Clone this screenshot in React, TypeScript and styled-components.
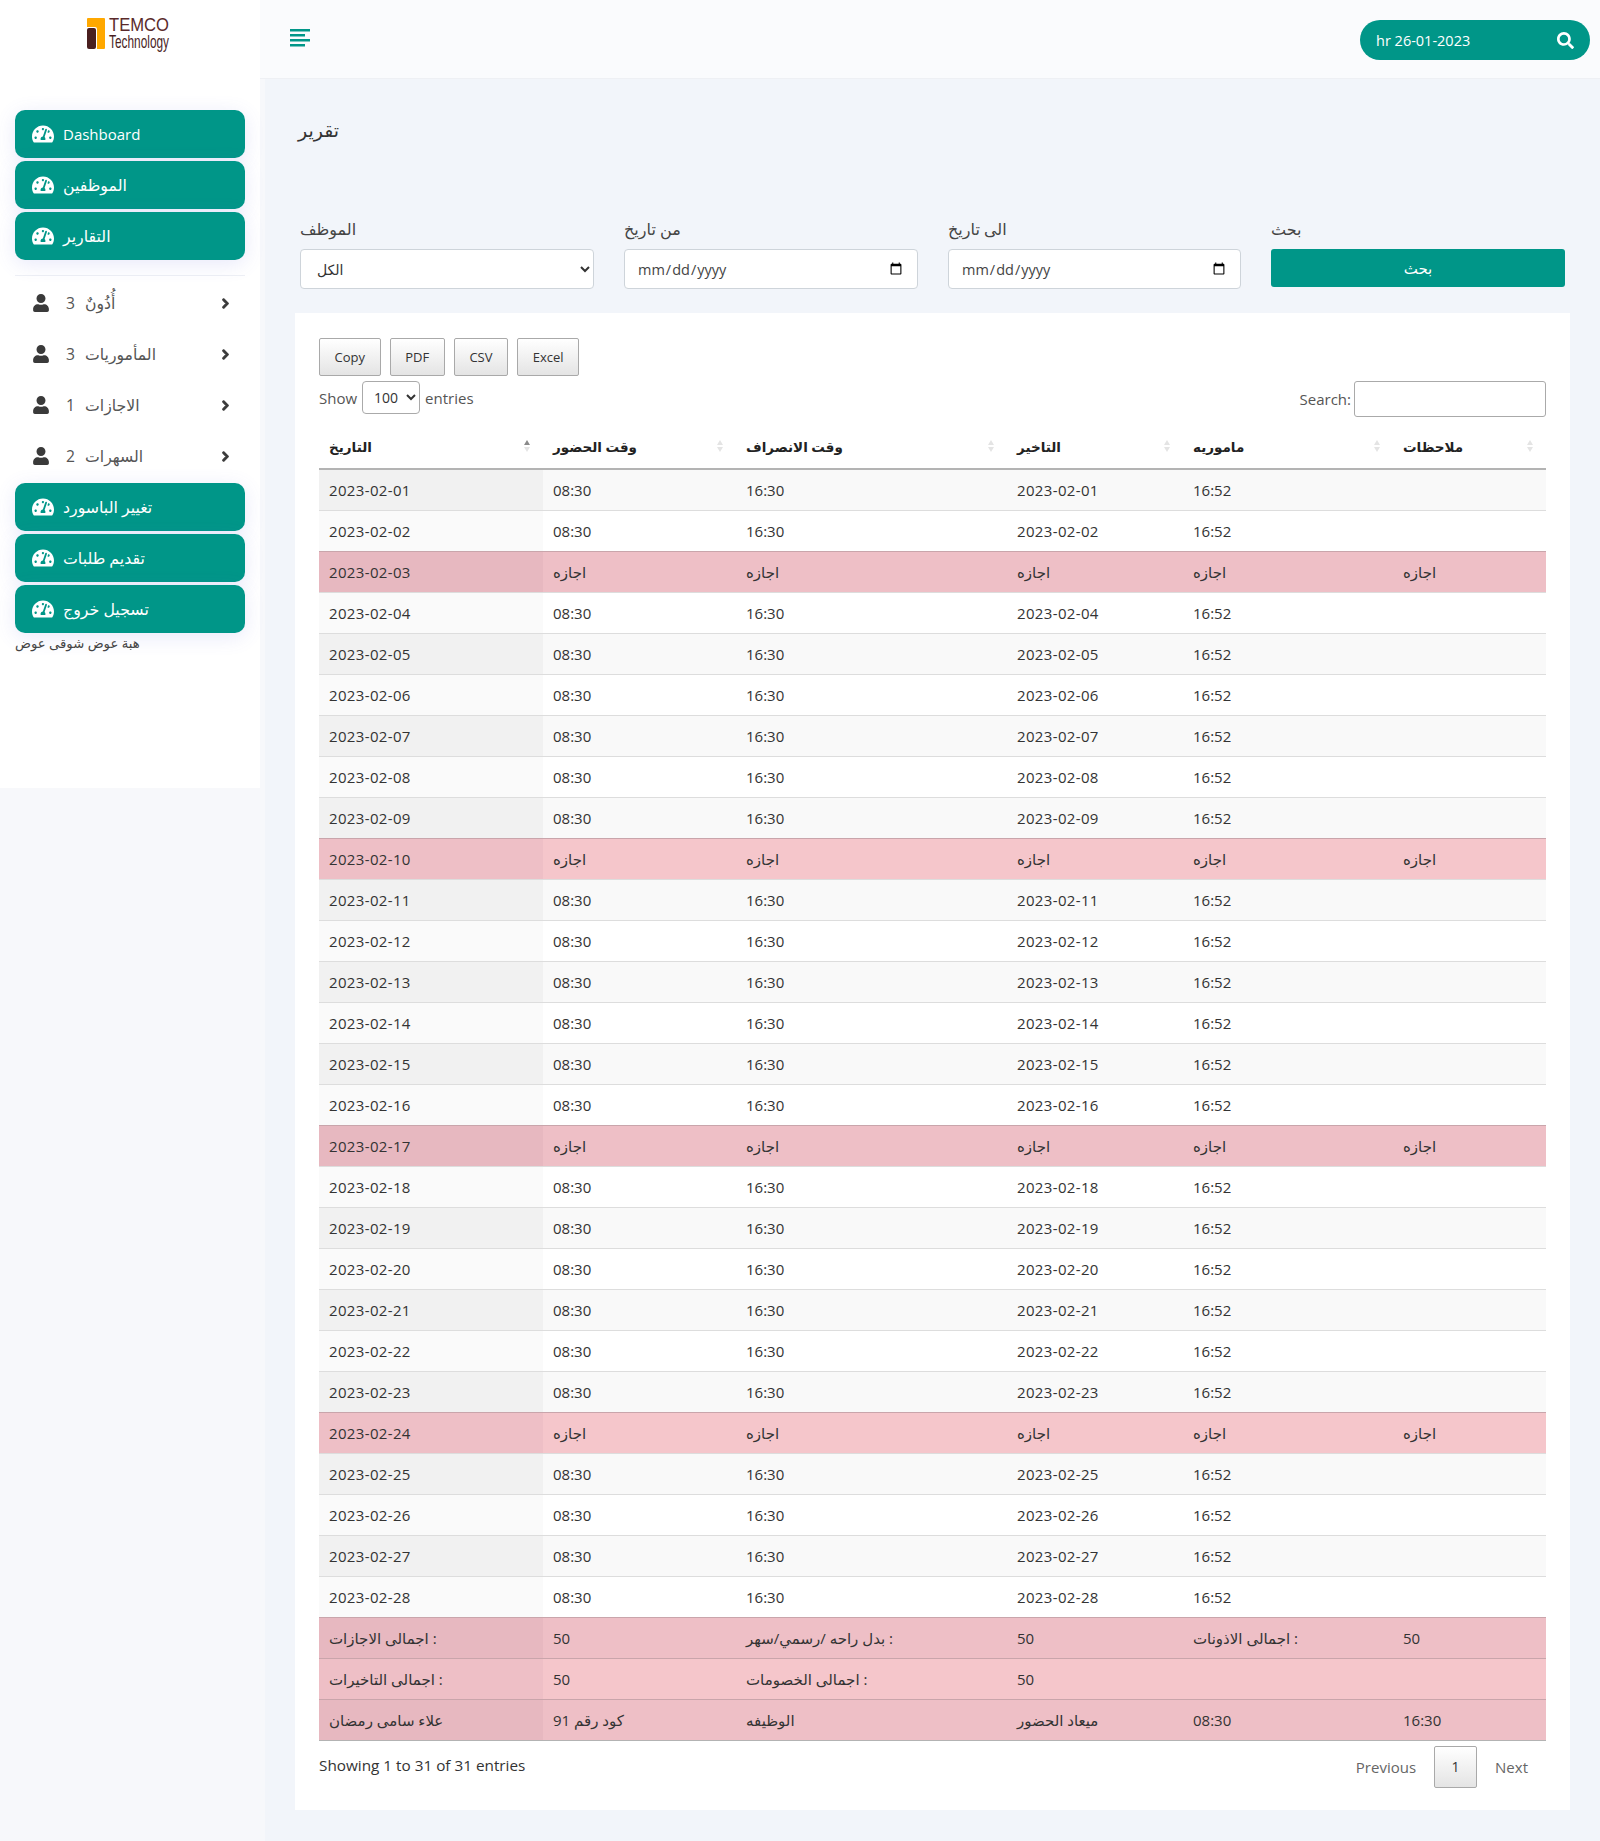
import React from 'react'
import styled, { createGlobalStyle } from 'styled-components'
import { FaTachometerAlt, FaUser, FaChevronRight, FaSearch } from 'react-icons/fa'

const teal = '#009688'
const fontStack = `"Open Sans", "DejaVu Sans", sans-serif`

const GlobalStyle = createGlobalStyle`
    * { box-sizing: border-box; }
    html, body { margin: 0; padding: 0; }
    body {
        background: #f2f5fa;
        color: #212529;
        font-family: ${fontStack};
        font-size: 15px;
    }
`

const Page = styled.div`
    display: grid;
    grid-template-columns: 265px 1fr;
    min-height: 1841px;
`
const SideColumn = styled.div`
    background: #f7f8fb;
`
const Sidebar = styled.aside`
    width: 260px;
    height: 788px;
    background: #fff;
    padding: 0 15px;
`
const LogoBar = styled.div`
    height: 110px;
    padding: 10px 0 0 72px;
`
const NavGroup = styled.div`
    display: flex;
    flex-direction: column;
    gap: 3px;
`
const NavButton = styled.a`
    height: 48px;
    display: flex;
    align-items: center;
    gap: 9px;
    padding-left: 17px;
    background: ${teal};
    color: #fff;
    border-radius: 10px;
    box-shadow: 0 4px 20px rgba(90, 100, 220, 0.14);
`
const NavLabel = styled.span<{ $latin?: boolean }>`
    font-size: ${p => (p.$latin ? '15px' : '15.8px')};
`
const Divider = styled.hr`
    height: 1px;
    margin: 15px 0 1px;
    border: 0;
    background: #eef0f5;
`
const MenuList = styled.div`
    display: flex;
    flex-direction: column;
    margin-bottom: 2px;
`
const MenuItem = styled.a`
    height: 51px;
    display: flex;
    align-items: center;
    padding: 0 14px 0 17px;
    color: #555;
    font-size: 15.7px;
`
const MenuIcon = styled.span`
    display: flex;
    width: 34px;
    color: #3a3a3a;
    font-size: 18px;
`
const MenuCount = styled.span`
    width: 19px;
`
const MenuLabel = styled.span`
    flex: 1;
`
const MenuArrow = styled.span`
    display: flex;
    padding-top: 2px;
    color: #3a3a3a;
    font-size: 11px;
    & svg {
        stroke: currentColor;
        stroke-width: 50;
    }
`
const Caption = styled.div`
    font-size: 13.2px;
    line-height: 17px;
    margin-top: 2px;
    color: #444;
`

const Main = styled.main`
    display: flex;
    flex-direction: column;
    min-width: 0;
`
const TopBar = styled.header`
    height: 79px;
    margin-left: -5px;
    display: flex;
    align-items: flex-start;
    justify-content: space-between;
    padding: 20px 10px 0 30px;
    background: #fafbfd;
    border-bottom: 1px solid #eef0f4;
`
const SearchPill = styled.div`
    width: 230px;
    height: 40px;
    display: flex;
    align-items: center;
    justify-content: space-between;
    padding: 0 16px;
    background: ${teal};
    border-radius: 20px;
    color: #fff;
    font-size: 14.5px;
`
const Content = styled.div`
    padding: 35px 30px 31px 30px;
`
const Title = styled.h1`
    margin: 0 0 71px 3px;
    height: 32px;
    font-size: 19px;
    font-weight: 400;
    line-height: 32px;
    color: #333;
`
const FilterRow = styled.div`
    display: grid;
    grid-template-columns: 294px 294px 293px 294px;
    column-gap: 30px;
    margin: 0 0 24px 5px;
    height: 72px;
`
const Field = styled.label`
    display: flex;
    flex-direction: column;
    gap: 7px;
    font-size: 16px;
    line-height: 25px;
    color: #444;
`
const FilterSelect = styled.select`
    height: 40px;
    padding: 0 12px;
    background: #fff;
    border: 1px solid #ced4da;
    border-radius: 4px;
    font: 14px ${fontStack};
    color: #333;
`
const FilterDate = styled.input`
    height: 40px;
    padding: 0 12px;
    background: #fff;
    border: 1px solid #ced4da;
    border-radius: 4px;
    font: 14.5px ${fontStack};
    color: #444;
`
const SubmitButton = styled.button`
    height: 38px;
    background: ${teal};
    border: 0;
    border-radius: 3px;
    color: #fff;
    font: 15px ${fontStack};
`
const Panel = styled.section`
    background: #fff;
    padding: 25px 24px 0;
    height: 1497px;
`
const ExportBar = styled.div`
    display: flex;
    gap: 9px;
    height: 38px;
`
const GreyButton = styled.button`
    height: 38px;
    padding: 0 14.6px;
    background: linear-gradient(to bottom, #fff 0%, #e4e4e4 100%);
    border: 1px solid #a9a9a9;
    border-radius: 2px;
    color: #333;
    font: 13px ${fontStack};
`
const TableTools = styled.div`
    display: flex;
    justify-content: space-between;
    align-items: flex-start;
    height: 49px;
    padding-top: 5px;
    color: #555;
    font-size: 15px;
`
const ToolLabel = styled.label`
    display: flex;
    align-items: center;
    gap: 5px;
`
const SearchLabel = styled(ToolLabel)`
    gap: 3px;
`
const LengthSelect = styled.select`
    width: 58px;
    height: 33px;
    padding: 0 4px 0 7px;
    background: #fff;
    border: 1px solid #aaa;
    border-radius: 4px;
    font: 14px ${fontStack};
    color: #333;
`
const SearchInput = styled.input`
    width: 192px;
    height: 36px;
    background: #fff;
    border: 1px solid #aaa;
    border-radius: 3px;
`
const Table = styled.table`
    width: 1227px;
    border-collapse: collapse;
    table-layout: fixed;
    font-size: 15px;
`
const HeadCell = styled.th`
    position: relative;
    height: 44px;
    padding: 0 10px;
    text-align: left;
    font-size: 13.5px;
    font-weight: 600;
    color: #222;
    border-bottom: 2px solid #b3b3b3;
`
const SortMark = styled.span<{ $active?: boolean }>`
    position: absolute;
    right: 13px;
    top: 15px;
    display: flex;
    flex-direction: column;
    gap: 2px;
    &::before, &::after {
        content: '';
        border-left: 3px solid transparent;
        border-right: 3px solid transparent;
    }
    &::before {
        border-bottom: 5px solid ${p => (p.$active ? '#8a8a8a' : '#e4e4e4')};
    }
    &::after {
        border-top: 5px solid #e4e4e4;
    }
`
const Row = styled.tr<{ $odd: boolean; $danger: boolean }>`
    background: ${p => (p.$danger ? (p.$odd ? '#eebfc6' : '#f5c6cb') : p.$odd ? '#f9f9f9' : '#fff')};
    & > td {
        border-top: 1px solid ${p => (p.$danger ? '#c9a5ab' : '#ddd')};
    }
`
const Cell = styled.td<{ $sorted?: string }>`
    height: 41px;
    padding: 0 10px;
    background: ${p => p.$sorted || 'transparent'};
    color: #333;
    white-space: nowrap;
`
const DateText = styled.span`
    letter-spacing: 0.35px;
`
const TableBody = styled.tbody`
    border-bottom: 1px solid #b3b3b3;
`
const TableFooter = styled.div`
    display: flex;
    justify-content: space-between;
    align-items: flex-start;
    padding-top: 5px;
    color: #333;
    font-size: 15px;
`
const Info = styled.div`
    line-height: 38px;
    font-size: 15.3px;
`
const Pager = styled.div`
    display: flex;
    align-items: center;
    height: 42px;
    color: #666;
`
const PagerLink = styled.a`
    padding: 0 18px;
`
const PagerCurrent = styled(GreyButton)`
    width: 43px;
    height: 42px;
    padding: 0;
    font-size: 14px;
`

function Logo() {
    return (
        <svg width="130" height="56" viewBox="0 -8 130 56" fontFamily="Liberation Sans, sans-serif">
            <path d="M1 0h16a1 1 0 0 1 1 1v29a1 1 0 0 1-1 1h-7V11a2 2 0 0 0-2-2H0V1a1 1 0 0 1 1-1z" fill="#ffa800" />
            <rect x="0" y="10" width="9" height="21" rx="2" fill="#4a1f1f" />
            <text x="22" y="13" fontSize="18" fill="#5a2a2a" textLength="60" lengthAdjust="spacingAndGlyphs">TEMCO</text>
            <text x="22" y="30" fontSize="19" fill="#4a1f1f" textLength="60" lengthAdjust="spacingAndGlyphs">Technology</text>
        </svg>
    )
}

function Hamburger() {
    return (
        <svg width="20" height="18" viewBox="0 0 20 18" style={{ marginTop: 9 }}>
            <rect x="0" y="0" width="20" height="2.5" fill={teal} />
            <rect x="0" y="5" width="15" height="2.5" fill={teal} />
            <rect x="0" y="10" width="20" height="2.5" fill={teal} />
            <rect x="0" y="15" width="15" height="2.5" fill={teal} />
        </svg>
    )
}

function NavLink({ label, latin }: { label: string; latin?: boolean }) {
    return (
        <NavButton>
            <FaTachometerAlt size={22} />
            <NavLabel $latin={latin}>{label}</NavLabel>
        </NavButton>
    )
}

const columns = [
    { title: 'التاريخ', width: 224 },
    { title: 'وقت الحضور', width: 193 },
    { title: 'وقت الانصراف', width: 271 },
    { title: 'التاخير', width: 176 },
    { title: 'ماموريه', width: 210 },
    { title: 'ملاحظات', width: 153 },
]

const leave = 'اجازه'
const offDays = [3, 10, 17, 24]
const days = Array.from({ length: 28 }, (_, i) => i + 1)

const summaryRows = [
    ['اجمالى الاجازات :', '50', 'بدل راحه /رسمي/سهر :', '50', 'اجمالى الاذونات :', '50'],
    ['اجمالى التاخيرات :', '50', 'اجمالى الخصومات :', '50', '', ''],
    ['علاء سامى رمضان', 'كود رقم 91', 'الوظيفه', 'ميعاد الحضور', '08:30', '16:30'],
]

function firstColour(odd: boolean, danger: boolean) {
    if (danger) return odd ? '#e7b8c0' : '#eebfc6'
    return odd ? '#f1f1f1' : '#fafafa'
}

function DataRow({ index, cells, danger }: { index: number; cells: string[]; danger: boolean }) {
    const odd = index % 2 === 0
    return (
        <Row $odd={odd} $danger={danger}>
            {cells.map((text, i) => (
                <Cell key={i} $sorted={i === 0 ? firstColour(odd, danger) : undefined}>
                    {/^\d{4}-/.test(text) ? <DateText>{text}</DateText> : text}
                </Cell>
            ))}
        </Row>
    )
}

export default function App() {
    return (
        <Page>
            <GlobalStyle />
            <SideColumn>
                <Sidebar>
                    <LogoBar>
                        <Logo />
                    </LogoBar>
                    <NavGroup>
                        <NavLink label="Dashboard" latin />
                        <NavLink label="الموظفين" />
                        <NavLink label="التقارير" />
                    </NavGroup>
                    <Divider />
                    <MenuList>
                        {[['3', 'أُذُونٌ'], ['3', 'المأموريات'], ['1', 'الاجازات'], ['2', 'السهرات']].map(([count, label]) => (
                            <MenuItem key={label}>
                                <MenuIcon><FaUser /></MenuIcon>
                                <MenuCount>{count}</MenuCount>
                                <MenuLabel>{label}</MenuLabel>
                                <MenuArrow><FaChevronRight /></MenuArrow>
                            </MenuItem>
                        ))}
                    </MenuList>
                    <NavGroup>
                        <NavLink label="تغيير الباسورد" />
                        <NavLink label="تقديم طلبات" />
                        <NavLink label="تسجيل خروج" />
                    </NavGroup>
                    <Caption>هبة عوض شوقى عوض</Caption>
                </Sidebar>
            </SideColumn>
            <Main>
                <TopBar>
                    <Hamburger />
                    <SearchPill>
                        <span>hr 26-01-2023</span>
                        <FaSearch size={17} />
                    </SearchPill>
                </TopBar>
                <Content>
                    <Title>تقرير</Title>
                    <FilterRow>
                        <Field>
                            الموظف
                            <FilterSelect defaultValue="all">
                                <option value="all">الكل</option>
                            </FilterSelect>
                        </Field>
                        <Field>
                            من تاريخ
                            <FilterDate type="date" />
                        </Field>
                        <Field>
                            الى تاريخ
                            <FilterDate type="date" />
                        </Field>
                        <Field>
                            بحث
                            <SubmitButton>بحث</SubmitButton>
                        </Field>
                    </FilterRow>
                    <Panel>
                        <ExportBar>
                            {['Copy', 'PDF', 'CSV', 'Excel'].map(name => (
                                <GreyButton key={name}>{name}</GreyButton>
                            ))}
                        </ExportBar>
                        <TableTools>
                            <ToolLabel>
                                Show
                                <LengthSelect defaultValue="100">
                                    <option value="100">100</option>
                                </LengthSelect>
                                entries
                            </ToolLabel>
                            <SearchLabel>
                                Search:
                                <SearchInput />
                            </SearchLabel>
                        </TableTools>
                        <Table>
                            <colgroup>
                                {columns.map(c => <col key={c.title} width={c.width} />)}
                            </colgroup>
                            <thead>
                                <tr>
                                    {columns.map((c, i) => (
                                        <HeadCell key={c.title}>
                                            {c.title}
                                            <SortMark $active={i === 0} />
                                        </HeadCell>
                                    ))}
                                </tr>
                            </thead>
                            <TableBody>
                                {days.map((day, i) => {
                                    const date = `2023-02-${String(day).padStart(2, '0')}`
                                    const off = offDays.includes(day)
                                    const cells = off
                                        ? [date, leave, leave, leave, leave, leave]
                                        : [date, '08:30', '16:30', date, '16:52', '']
                                    return <DataRow key={day} index={i} cells={cells} danger={off} />
                                })}
                                {summaryRows.map((cells, i) => (
                                    <DataRow key={i} index={28 + i} cells={cells} danger />
                                ))}
                            </TableBody>
                        </Table>
                        <TableFooter>
                            <Info>Showing 1 to 31 of 31 entries</Info>
                            <Pager>
                                <PagerLink>Previous</PagerLink>
                                <PagerCurrent>1</PagerCurrent>
                                <PagerLink>Next</PagerLink>
                            </Pager>
                        </TableFooter>
                    </Panel>
                </Content>
            </Main>
        </Page>
    )
}
